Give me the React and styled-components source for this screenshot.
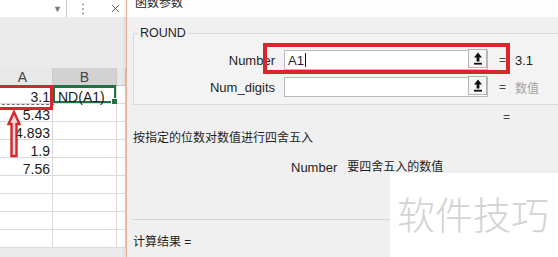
import React from "react";
import styled, { createGlobalStyle } from "styled-components";
import { X } from "lucide-react";

const GlobalStyle = createGlobalStyle`
  html, body {
    margin: 0;
    padding: 0;
    background: #f0f0f0;
  }
  * {
    box-sizing: border-box;
  }
`;

const Page = styled.div`
  width: 558px;
  height: 257px;
  display: flex;
  overflow: hidden;
  font-family: "Liberation Sans", "Noto Sans CJK SC", sans-serif;
  color: #1f1f1f;
`;

/* ---------- spreadsheet side ---------- */

const Sheet = styled.div`
  position: relative;
  width: 126px;
  flex: none;
  display: flex;
  flex-direction: column;
  background: #ebebeb;
  overflow: hidden;
`;

const TopBar = styled.div`
  flex: none;
  height: 17px;
  display: flex;
  align-items: center;
  background: #ffffff;
`;

const NameBox = styled.div`
  width: 67px;
  height: 100%;
  display: flex;
  align-items: center;
  justify-content: flex-end;
  padding-right: 4px;
  border-right: 1px solid #c8c8c8;
  color: #777;
  font-size: 9px;
`;

const BarTools = styled.div`
  flex: 1;
  display: flex;
  align-items: center;
  padding-left: 14px;
  gap: 24px;
  color: #8a8a8a;
`;

const Blank = styled.div`
  flex: none;
  height: 51px;
`;

const Grid = styled.div`
  flex: none;
  display: grid;
  grid-template-columns: 60px 64px 9px;
  grid-auto-rows: 18px;
  margin-left: -7px;
  background: #ffffff;
`;

const HeaderCell = styled.div`
  background: ${(p) => (p.$selected ? "#d2d2d2" : "#e8e8e8")};
  border-right: 1px solid #c9c9c9;
  border-bottom: 1px solid ${(p) => (p.$selected ? "#217346" : "#c9c9c9")};
  color: #444;
  font-size: 14px;
  line-height: 15px;
  padding-top: 2px;
  text-align: center;
`;

const Cell = styled.div`
  position: relative;
  border-right: 1px solid #dadada;
  border-bottom: 1px solid #dadada;
  font-size: 14px;
  line-height: 13px;
  padding-top: 5px;
  padding-right: ${(p) => (p.$text ? "0" : "2px")};
  padding-left: ${(p) => (p.$text ? "5px" : "0")};
  text-align: ${(p) => (p.$text ? "left" : "right")};
  white-space: nowrap;
  overflow: ${(p) => (p.$active ? "visible" : "hidden")};
  color: #1a1a1a;
  ${(p) =>
    p.$marquee &&
    `
    overflow: visible;
    outline: 1px dashed #6f6f6f;
    outline-offset: 0;
  `}
  ${(p) =>
    p.$active &&
    `
    box-shadow: inset 0 0 0 2px #217346;
    &::after {
      content: "";
      position: absolute;
      right: -2px;
      bottom: -2px;
      width: 5px;
      height: 5px;
      background: #217346;
      border: 1px solid #fff;
    }
  `}
`;

const RedFrame = styled.div`
  position: absolute;
  left: -4px;
  top: 85px;
  width: 57px;
  height: 25px;
  border: 3px solid #d4262c;
`;

const ArrowMark = styled.svg`
  position: absolute;
  left: 7px;
  top: 110px;
`;

/* ---------- dialog side ---------- */

const Dialog = styled.div`
  position: relative;
  flex: 1;
  display: flex;
  flex-direction: column;
  background: #f0f0f0;
  border-left: 1px solid #e2b197;
  box-shadow: -2px 0 3px rgba(0, 0, 0, 0.06);
`;

const TitleBar = styled.div`
  flex: none;
  height: 17px;
  background: #fdfdfd;
  padding-left: 8px;
  overflow: hidden;
`;

const Title = styled.div`
  margin-top: -3px;
  font-size: 12px;
  line-height: 13px;
  color: #222;
`;

const Body = styled.div`
  flex: 1;
  display: flex;
  flex-direction: column;
  padding-left: 6px;
`;

const Group = styled.div`
  flex: none;
  margin-top: 16px;
  margin-right: -10px;
  border: 1px solid #d9d9d9;
  background: #f3f3f3;
`;

const Legend = styled.div`
  width: fit-content;
  margin: -8px 0 0 4px;
  padding: 0 2px;
  background: #f0f0f0;
  font-size: 12.5px;
  line-height: 15px;
`;

const ArgList = styled.div`
  display: flex;
  flex-direction: column;
  gap: 7px;
  padding: 9px 0 7px;
`;

const ArgRow = styled.div`
  display: flex;
  align-items: center;
  height: 20px;
  font-size: 13px;
`;

const ArgLabel = styled.div`
  width: 141px;
  text-align: right;
`;

const Field = styled.div`
  margin-left: 9px;
  width: 204px;
  height: 20px;
  display: flex;
  align-items: center;
  background: #ffffff;
  border: 1px solid #b9b9b9;
`;

const FieldText = styled.div`
  flex: 1;
  padding-left: 3px;
  font-size: 13px;
  display: flex;
  align-items: center;
`;

const TextCaret = styled.span`
  display: inline-block;
  width: 1px;
  height: 14px;
  margin-left: 1px;
  background: #111;
`;

const PickButton = styled.div`
  width: 19px;
  height: 19px;
  margin-top: -3px;
  display: flex;
  align-items: center;
  justify-content: center;
  background: #f6f6f6;
  border: 1px solid #b3b3b3;
`;

const Eq = styled.div`
  margin-left: 11px;
  width: 16px;
  font-size: 12px;
  color: #444;
`;

const Value = styled.div`
  font-size: ${(p) => (p.$hint ? "12px" : "13px")};
  color: ${(p) => (p.$hint ? "#a2a2a2" : "#222")};
`;

const ResultEq = styled.div`
  margin-top: 5px;
  padding-left: 370px;
  font-size: 12px;
  line-height: 15px;
  color: #444;
`;

const Description = styled.div`
  margin-top: 6px;
  font-size: 12px;
  line-height: 15px;
`;

const ArgHelp = styled.div`
  margin-top: 14px;
  padding-left: 158px;
  display: flex;
  gap: 10px;
  line-height: 15px;
`;

const HelpName = styled.span`
  font-size: 13px;
`;

const HelpText = styled.span`
  font-size: 12px;
`;

const Divider = styled.div`
  flex: none;
  margin-top: 44px;
  height: 1px;
  background: #d6d6d6;
`;

const Result = styled.div`
  margin-top: 15px;
  font-size: 12px;
  line-height: 15px;
`;

const Highlight = styled.div`
  position: absolute;
  left: 136px;
  top: 43px;
  width: 247px;
  height: 31px;
  border: 4px solid #d8262b;
`;

const Watermark = styled.div`
  position: absolute;
  left: 263px;
  top: 173px;
  right: 0;
  bottom: 0;
  background: #ffffff;
  padding: 18px 0 0 7px;
  font-family: "Noto Sans CJK SC", sans-serif;
  font-weight: 300;
  font-size: 38px;
  line-height: 44px;
  color: #d3d3d3;
  white-space: nowrap;
`;

const rows = [
  { a: "3.1", b: "ND(A1)" },
  { a: "5.43" },
  { a: "4.893" },
  { a: "1.9" },
  { a: "7.56" },
  {},
  {},
  {},
  {},
];

const UpIcon = () => (
  <svg width="10" height="13" viewBox="0 0 10 13">
    <path d="M5 0.5 L1 5.5 H3.6 V9.5 H6.4 V5.5 H9 Z" fill="#111" />
    <rect x="1" y="10.8" width="8" height="1.8" fill="#111" />
  </svg>
);

const Dots = () => (
  <svg width="4" height="14" viewBox="0 0 4 14">
    <circle cx="2" cy="2.5" r="1" fill="#9a9a9a" />
    <circle cx="2" cy="7" r="1" fill="#9a9a9a" />
    <circle cx="2" cy="11.5" r="1" fill="#9a9a9a" />
  </svg>
);

const App = () => {
  return (
    <Page>
      <GlobalStyle />
      <Sheet>
        <TopBar>
          <NameBox>▼</NameBox>
          <BarTools>
            <Dots />
            <X size={13} strokeWidth={1.6} color="#4a4a4a" />
          </BarTools>
        </TopBar>
        <Blank />
        <Grid>
          <HeaderCell>A</HeaderCell>
          <HeaderCell $selected>B</HeaderCell>
          <HeaderCell />
          {rows.map((row, index) => (
            <React.Fragment key={index}>
              <Cell $marquee={index === 0}>{row.a}</Cell>
              <Cell $text $active={index === 0}>
                {row.b}
              </Cell>
              <Cell />
            </React.Fragment>
          ))}
        </Grid>
        <RedFrame />
        <ArrowMark width="14" height="48" viewBox="0 0 14 48">
          <path
            d="M7 2 L1.5 14 H4.5 V46 H9.5 V14 H12.5 Z"
            fill="#f7dada"
            stroke="#d4262c"
            strokeWidth="2.4"
            strokeLinejoin="miter"
          />
        </ArrowMark>
      </Sheet>

      <Dialog>
        <TitleBar>
          <Title>函数参数</Title>
        </TitleBar>
        <Body>
          <Group>
            <Legend>ROUND</Legend>
            <ArgList>
              <ArgRow>
                <ArgLabel>Number</ArgLabel>
                <Field>
                  <FieldText>
                    A1
                    <TextCaret />
                  </FieldText>
                  <PickButton>
                    <UpIcon />
                  </PickButton>
                </Field>
                <Eq>=</Eq>
                <Value>3.1</Value>
              </ArgRow>
              <ArgRow>
                <ArgLabel>Num_digits</ArgLabel>
                <Field>
                  <FieldText />
                  <PickButton>
                    <UpIcon />
                  </PickButton>
                </Field>
                <Eq>=</Eq>
                <Value $hint>数值</Value>
              </ArgRow>
            </ArgList>
          </Group>
          <ResultEq>=</ResultEq>
          <Description>按指定的位数对数值进行四舍五入</Description>
          <ArgHelp>
            <HelpName>Number</HelpName>
            <HelpText>要四舍五入的数值</HelpText>
          </ArgHelp>
          <Divider />
          <Result>计算结果 =</Result>
        </Body>
        <Highlight />
        <Watermark>软件技巧</Watermark>
      </Dialog>
    </Page>
  );
};

export default App;
